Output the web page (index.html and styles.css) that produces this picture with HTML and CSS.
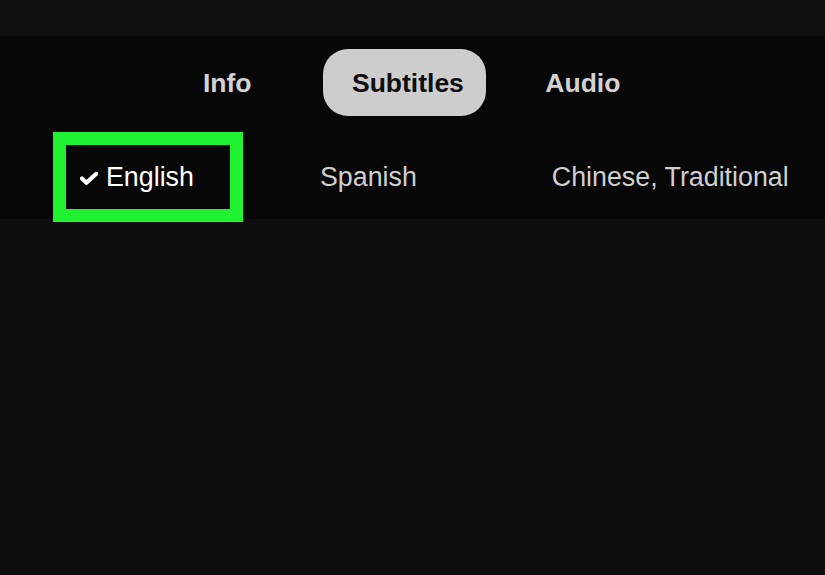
FILE: index.html
```html
<!DOCTYPE html>
<html>
<head>
<meta charset="utf-8">
<link rel="stylesheet" href="styles.css">
</head>
<body>
<div class="top"></div>
<div class="panel">
  <div class="tabs">
    <div class="tab tab-info">Info</div>
    <div class="tab tab-active">Subtitles</div>
    <div class="tab tab-audio">Audio</div>
  </div>
  <div class="langs">
    <div class="lang lang-selected">
      <svg class="check" width="18" height="13" viewBox="0 0 18 13"><path d="M2 6.4 L6.4 10.8 L16.2 1.8" fill="none" stroke="#ffffff" stroke-width="4.2" stroke-linecap="round" stroke-linejoin="round"/></svg>
      <span>English</span>
    </div>
    <div class="lang lang-spanish">Spanish</div>
    <div class="lang lang-chinese">Chinese, Traditional</div>
  </div>
</div>
</body>
</html>
```
FILE: styles.css
```css
html, body {
  margin: 0;
  padding: 0;
}
body {
  background: #0e0e0e;
  font-family: "Liberation Sans", Arial, sans-serif;
  width: 825px;
  height: 575px;
  overflow: hidden;
}
.top {
  height: 36px;
  background: #0f0f0f;
}
.panel {
  height: 183px;
  background: #070707;
  padding-top: 13px;
  box-sizing: border-box;
}
.tabs {
  display: flex;
  align-items: center;
  height: 67px;
  padding-left: 203px;
}
.tab {
  font-size: 26.5px;
  font-weight: bold;
  color: #d2d2d2;
  padding-top: 2px;
}
.tab-active {
  box-sizing: border-box;
  margin-left: 71.4px;
  height: 67px;
  width: 163px;
  padding: 2px 0 0 29px;
  border-radius: 25px;
  background: #cdcdcd;
  color: #0d0d0d;
  display: flex;
  align-items: center;
}
.tab-audio {
  margin-left: 59.4px;
}
.langs {
  margin-top: 16px;
  display: flex;
  align-items: center;
  height: 90px;
  padding-left: 53px;
}
.lang {
  font-size: 26.8px;
  color: #cfcfcf;
}
.lang-selected {
  box-sizing: border-box;
  height: 90px;
  width: 190px;
  border: 13px solid #20f232;
  padding-left: 14px;
  display: flex;
  align-items: center;
  color: #ffffff;
  background: #070707;
}
.check {
  margin-right: 8px;
  margin-top: 2px;
  flex: none;
}
.lang-spanish {
  margin-left: 77px;
}
.lang-chinese {
  margin-left: 135px;
}
```
